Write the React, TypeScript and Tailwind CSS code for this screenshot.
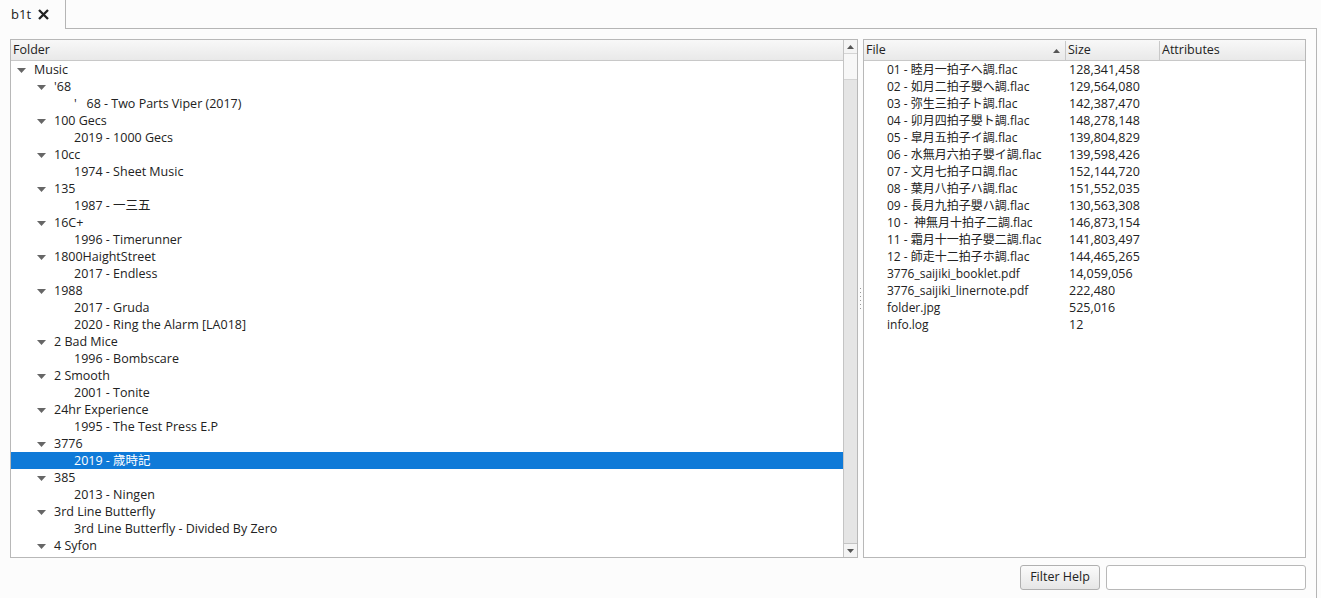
const FONT = "font-['Segoe_UI','Open_Sans','Noto_Sans_CJK_SC',sans-serif]";

type Node = [number, string, boolean];

const folders: Node[] = [
  [0, "Music", true],
  [1, "'68", true],
  [2, "'   68 - Two Parts Viper (2017)", false],
  [1, "100 Gecs", true],
  [2, "2019 - 1000 Gecs", false],
  [1, "10cc", true],
  [2, "1974 - Sheet Music", false],
  [1, "135", true],
  [2, "1987 - 一三五", false],
  [1, "16C+", true],
  [2, "1996 - Timerunner", false],
  [1, "1800HaightStreet", true],
  [2, "2017 - Endless", false],
  [1, "1988", true],
  [2, "2017 - Gruda", false],
  [2, "2020 - Ring the Alarm [LA018]", false],
  [1, "2 Bad Mice", true],
  [2, "1996 - Bombscare", false],
  [1, "2 Smooth", true],
  [2, "2001 - Tonite", false],
  [1, "24hr Experience", true],
  [2, "1995 - The Test Press E.P", false],
  [1, "3776", true],
  [2, "2019 - 歳時記", false],
  [1, "385", true],
  [2, "2013 - Ningen", false],
  [1, "3rd Line Butterfly", true],
  [2, "3rd Line Butterfly - Divided By Zero", false],
  [1, "4 Syfon", true],
];

const files: [string, string][] = [
  ["01 - 睦月一拍子へ調.flac", "128,341,458"],
  ["02 - 如月二拍子嬰へ調.flac", "129,564,080"],
  ["03 - 弥生三拍子ト調.flac", "142,387,470"],
  ["04 - 卯月四拍子嬰ト調.flac", "148,278,148"],
  ["05 - 皐月五拍子イ調.flac", "139,804,829"],
  ["06 - 水無月六拍子嬰イ調.flac", "139,598,426"],
  ["07 - 文月七拍子ロ調.flac", "152,144,720"],
  ["08 - 葉月八拍子ハ調.flac", "151,552,035"],
  ["09 - 長月九拍子嬰ハ調.flac", "130,563,308"],
  ["10 -  神無月十拍子二調.flac", "146,873,154"],
  ["11 - 霜月十一拍子嬰二調.flac", "141,803,497"],
  ["12 - 師走十二拍子ホ調.flac", "144,465,265"],
  ["3776_saijiki_booklet.pdf", "14,059,056"],
  ["3776_saijiki_linernote.pdf", "222,480"],
  ["folder.jpg", "525,016"],
  ["info.log", "12"],
];

function Arrow() {
  return (
    <svg width="9" height="5" viewBox="0 0 9 5" className="shrink-0">
      <path d="M0 0 H9 L4.5 5 Z" fill="#666" />
    </svg>
  );
}

const headerCls =
  "h-[21px] shrink-0 flex items-center pt-[1px] border-b border-[#c8c8c8] bg-gradient-to-b from-[#f8f8f8] to-[#e9e9e9] text-[12.5px] text-[#222]";

function FolderTree() {
  const indent = ["pl-[6px]", "pl-[26px]", "pl-[63px]"];
  return (
    <div className="flex-1 min-w-0 flex flex-col overflow-hidden">
      <div className={headerCls + " pl-[2px]"}>Folder</div>
      <div className="flex-1 min-h-0 overflow-hidden">
        {folders.map(([lvl, text, exp], i) => {
          const sel = i === 23;
          return (
            <div
              key={i}
              className={
                "h-[17px] flex items-center pt-[1px] text-[12.5px] whitespace-pre " +
                indent[lvl] +
                (sel ? " bg-[#0f7ad8] text-white" : " text-[#222]")
              }
            >
              {exp && (
                <span className="w-[17px] flex items-center">
                  <Arrow />
                </span>
              )}
              <span>{text}</span>
            </div>
          );
        })}
      </div>
    </div>
  );
}

function ScrollBar() {
  return (
    <div className="w-[14px] shrink-0 flex flex-col bg-[#e5e5e5] border-l border-[#c4c4c4]">
      <div className="h-[13px] flex items-center justify-center bg-[#f4f4f4]">
        <svg width="7" height="4" viewBox="0 0 7 4">
          <path d="M0 4 H7 L3.5 0 Z" fill="#555" />
        </svg>
      </div>
      <div className="h-[27px] bg-[#f7f7f7] border-y border-[#d4d4d4]" />
      <div className="flex-1" />
      <div className="h-[14px] flex items-center justify-center bg-[#f4f4f4] border-t border-[#c4c4c4]">
        <svg width="7" height="4" viewBox="0 0 7 4">
          <path d="M0 0 H7 L3.5 4 Z" fill="#555" />
        </svg>
      </div>
    </div>
  );
}

function FileTable() {
  return (
    <div className="w-[443px] shrink-0 border border-[#b8b8b8] bg-white flex flex-col overflow-hidden">
      <div className={headerCls}>
        <div className="w-[202px] h-full flex items-center justify-between pl-[2px] pr-[5px] border-r border-[#c8c8c8]">
          <span>File</span>
          <svg width="7" height="4" viewBox="0 0 7 4">
            <path d="M0 4 H7 L3.5 0 Z" fill="#555" />
          </svg>
        </div>
        <div className="w-[94px] h-full flex items-center pl-[2px] border-r border-[#c8c8c8]">Size</div>
        <div className="flex-1 h-full flex items-center pl-[2px]">Attributes</div>
      </div>
      <div className="flex-1 min-h-0">
        {files.map(([name, size]) => (
          <div key={name} className="h-[17px] flex items-center pt-[1px] text-[12px] text-[#222] whitespace-pre">
            <span className="w-[203px] pl-[23px]">{name}</span>
            <span className="pl-[2px] text-[12.5px]">{size}</span>
          </div>
        ))}
      </div>
    </div>
  );
}

export default function App() {
  return (
    <div className={"w-[1321px] h-[598px] overflow-hidden bg-[#fcfcfc] flex flex-col " + FONT}>
      <div className="h-[29px] flex shrink-0">
        <div className="w-[66px] flex items-center gap-[7px] pl-[11px] text-[13px] text-[#222] bg-[#fcfcfc] border-r border-[#b5b5b5]">
          <span>b1t</span>
          <svg width="11" height="11" viewBox="0 0 11 11">
            <path d="M1 1 L10 10 M10 1 L1 10" stroke="#222" strokeWidth="2.3" />
          </svg>
        </div>
        <div className="w-[1251px] border-b border-[#b5b5b5]" />
      </div>
      <div className="h-[569px] w-[1317px] border-r border-[#b5b5b5] flex flex-col pl-[10px] pr-[10px] pt-[10px] pb-[8px]">
        <div className="h-[519px] flex">
          <div className="w-[848px] shrink-0 border border-[#b8b8b8] bg-white flex overflow-hidden">
            <FolderTree />
            <ScrollBar />
          </div>
          <div className="w-[5px] shrink-0 flex items-center justify-center">
            <div className="flex flex-col gap-[3px]">
              {[0, 1, 2, 3, 4, 5].map((i) => (
                <div key={i} className="w-[1px] h-[1px] bg-[#999]" />
              ))}
            </div>
          </div>
          <FileTable />
        </div>
        <div className="h-[32px] shrink-0 flex items-end justify-end gap-[6px]">
          <button className="h-[25px] w-[80px] rounded-[3px] border border-[#b0b0b0] bg-gradient-to-b from-[#fbfbfb] to-[#e6e6e6] text-[12.5px] text-[#222]">
            Filter Help
          </button>
          <div className="h-[25px] w-[200px] rounded-[3px] border border-[#b8b8b8] bg-white" />
        </div>
      </div>
    </div>
  );
}
